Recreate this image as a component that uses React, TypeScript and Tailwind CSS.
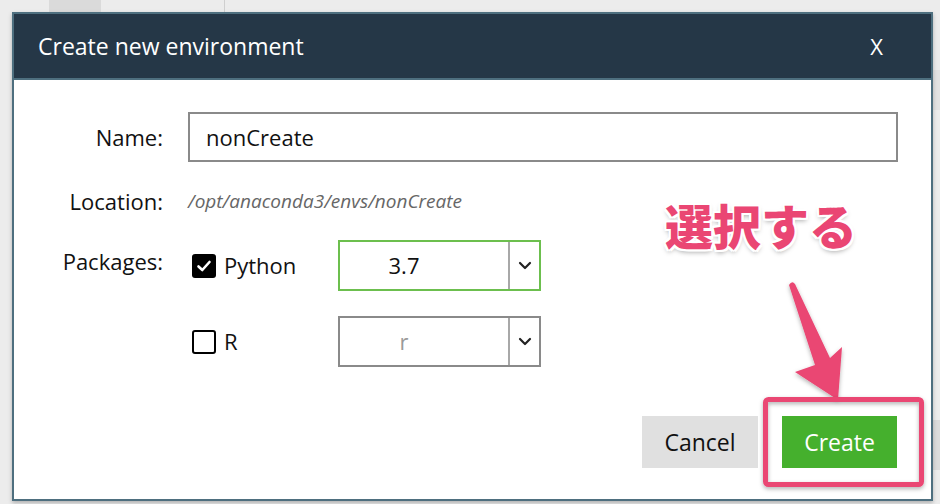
import React from "react";

function Chevron() {
  return (
    <svg width="14" height="9" viewBox="0 0 14 9" fill="none">
      <path d="M2 2 L7 7 L12 2" stroke="#222" strokeWidth="2.2" strokeLinecap="round" strokeLinejoin="round" />
    </svg>
  );
}

function Select({ value, active, muted }: { value: string; active?: boolean; muted?: boolean }) {
  return (
    <div
      className={`flex h-[51px] w-[203px] border-2 bg-white ${active ? "border-[#6cbf4e]" : "border-[#8a8a8a]"}`}
    >
      <div className={`flex flex-1 items-center justify-center pr-[40px] text-[22px] ${muted ? "text-[#9a9a9a]" : "text-[#111]"}`}>
        {value}
      </div>
      <div className="flex w-[31px] items-center justify-center border-l-2 border-[#a8a8a8]">
        <Chevron />
      </div>
    </div>
  );
}

function Checkbox({ checked }: { checked?: boolean }) {
  return checked ? (
    <div className="flex h-[24px] w-[24px] items-center justify-center rounded-[3px] bg-black">
      <svg width="16" height="14" viewBox="0 0 16 14" fill="none">
        <path d="M2.5 7.5 L6.3 11 L13.5 3" stroke="white" strokeWidth="2.6" strokeLinecap="round" strokeLinejoin="round" />
      </svg>
    </div>
  ) : (
    <div className="h-[24px] w-[24px] rounded-[3px] border-[2.5px] border-black bg-white" />
  );
}

export default function App() {
  return (
    <div
      className="relative h-[504px] w-[940px] overflow-hidden bg-[#ececec]"
      style={{ fontFamily: '"Open Sans", "Noto Sans", sans-serif' }}
    >
      {/* background hints */}
      <div className="absolute left-[49px] top-0 h-[12px] w-[52px] bg-[#dadada]" />
      <div className="absolute left-[224px] top-0 h-[12px] w-[1px] bg-[#cfcfcf]" />
      <div className="absolute right-0 top-[70px] h-[40px] w-[8px] bg-[#e2e2e2]" />
      <div className="absolute right-0 top-[420px] h-[50px] w-[8px] bg-[#dcdcdc]" />

      <div className="absolute left-[12px] top-[12px] flex h-[489px] w-[921px] flex-col border-2 border-[#4e6f7f] bg-white shadow-[0_2px_4px_rgba(0,0,0,0.25)]">
        {/* header */}
        <div className="flex h-[66px] items-center justify-between border-b-2 border-[#4e6f7f] bg-[#253747] pl-[24px] pr-[48px] text-white">
          <span className="text-[23px]">Create new environment</span>
          <span className="text-[22px]">X</span>
        </div>

        {/* body */}
        <div className="flex flex-1 flex-col pt-[32px] text-[#111]">
          <div className="flex items-center">
            <div className="w-[149px] text-right text-[22px]">Name:</div>
            <div className="ml-[25px] flex h-[50px] w-[710px] items-center border-2 border-[#8a8a8a] pl-[16px] text-[22px]">
              nonCreate
            </div>
          </div>

          <div className="mt-[23px] flex items-center">
            <div className="w-[149px] text-right text-[22px]">Location:</div>
            <div className="ml-[25px] text-[19px] italic text-[#666]">/opt/anaconda3/envs/nonCreate</div>
          </div>

          <div className="mt-[22px] flex">
            <div className="w-[149px] pt-[5px] text-right text-[22px]">Packages:</div>
            <div className="ml-[29px] flex flex-col gap-[25px]">
              <div className="flex items-center">
                <Checkbox checked />
                <span className="ml-[8px] w-[114px] text-[22px]">Python</span>
                <Select value="3.7" active />
              </div>
              <div className="flex items-center">
                <Checkbox />
                <span className="ml-[8px] w-[114px] text-[22px]">R</span>
                <Select value="r" muted />
              </div>
            </div>
          </div>

          <div className="mt-[49px] flex justify-end gap-[24px] pr-[34px]">
            <div className="flex h-[52px] w-[116px] items-center justify-center bg-[#e0e0e0] text-[23px] text-[#111]">
              Cancel
            </div>
            <div className="flex h-[52px] w-[115px] items-center justify-center bg-[#45b02d] text-[23px] text-white">
              Create
            </div>
          </div>
        </div>
      </div>

      {/* annotation */}
      <div
        className="absolute left-[665px] top-[200px] text-[48px] font-black leading-none text-[#ea4673]"
        style={{
          fontFamily: '"Noto Sans CJK JP", sans-serif',
          textShadow:
            "2px 0 0 #fff, -2px 0 0 #fff, 0 2px 0 #fff, 0 -2px 0 #fff, 2px 2px 0 #fff, -2px -2px 0 #fff, 2px -2px 0 #fff, -2px 2px 0 #fff, 0 3px 5px rgba(0,0,0,0.35)",
        }}
      >
        選択する
      </div>

      <svg className="absolute left-0 top-0" width="940" height="504" style={{ pointerEvents: "none" }}>
        <defs>
          <filter id="sh" x="-20%" y="-20%" width="140%" height="140%">
            <feDropShadow dx="0" dy="2" stdDeviation="2" floodColor="#000" floodOpacity="0.3" />
          </filter>
        </defs>
        <path
          d="M789 285 Q792 280 795 284 L830 358 L842 347 L838 400 L795 372 L815 365 Z"
          fill="#ea4673"
          filter="url(#sh)"
        />
        <rect x="765.5" y="399.5" width="156" height="85" rx="3" fill="none" stroke="#ea4673" strokeWidth="5" filter="url(#sh)" />
      </svg>
    </div>
  );
}
